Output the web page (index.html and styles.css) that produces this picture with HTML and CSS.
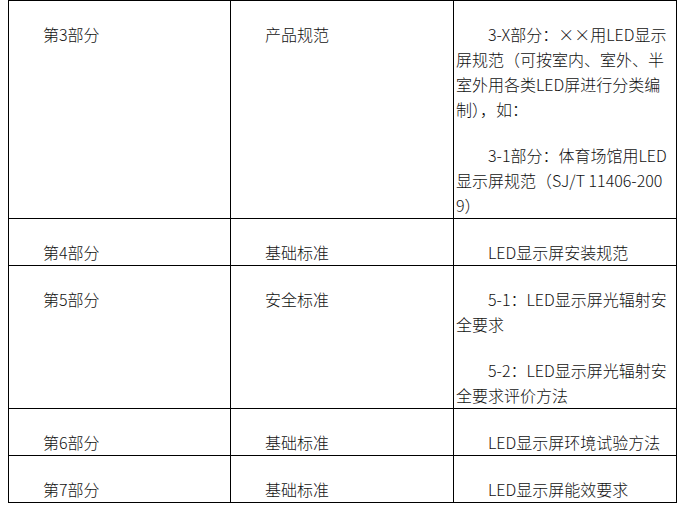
FILE: index.html
```html
<!DOCTYPE html>
<html lang="zh-CN">
<head>
<meta charset="utf-8">
<title>LED显示屏标准体系</title>
<link rel="stylesheet" href="styles.css">
</head>
<body>
<div class="page">
  <table class="std">
    <colgroup>
      <col class="c1">
      <col class="c2">
      <col class="c3">
    </colgroup>
    <tr>
      <td><p>第3部分</p></td>
      <td><p>产品规范</p></td>
      <td class="desc">
        <p>3-X部分：××用LED显示<br>屏规范（可按室内、室外、半<br>室外用各类LED屏进行分类编<br>制），如：</p>
        <p>3-1部分：体育场馆用LED<br>显示屏规范（SJ/T 11406-200<br>9）</p>
      </td>
    </tr>
    <tr>
      <td><p>第4部分</p></td>
      <td><p>基础标准</p></td>
      <td class="desc"><p>LED显示屏安装规范</p></td>
    </tr>
    <tr>
      <td><p>第5部分</p></td>
      <td><p>安全标准</p></td>
      <td class="desc">
        <p>5-1：LED显示屏光辐射安<br>全要求</p>
        <p>5-2：LED显示屏光辐射安<br>全要求评价方法</p>
      </td>
    </tr>
    <tr>
      <td><p>第6部分</p></td>
      <td><p>基础标准</p></td>
      <td class="desc"><p>LED显示屏环境试验方法</p></td>
    </tr>
    <tr>
      <td><p>第7部分</p></td>
      <td><p>基础标准</p></td>
      <td class="desc"><p>LED显示屏能效要求</p></td>
    </tr>
  </table>
</div>
</body>
</html>
```
FILE: styles.css
```css
html, body {
  margin: 0;
  padding: 0;
  background: #ffffff;
}

.page {
  padding: 0 0 0 8px;
}

.std {
  border-collapse: collapse;
  table-layout: fixed;
  width: 668px;
  font-family: "Noto Sans CJK SC", "Noto Sans", sans-serif;
  font-size: 16px;
  font-weight: 300;
  color: #111111;
}

.std .c1 { width: 222px; }
.std .c2 { width: 223px; }
.std .c3 { width: 223px; }

.std td {
  border: 1px solid #000000;
  padding: 0 2px;
  vertical-align: top;
}

.std p {
  margin: 21px 0 0;
  line-height: 25px;
  text-indent: 2em;
}

.std .desc p {
  white-space: nowrap;
}
```
